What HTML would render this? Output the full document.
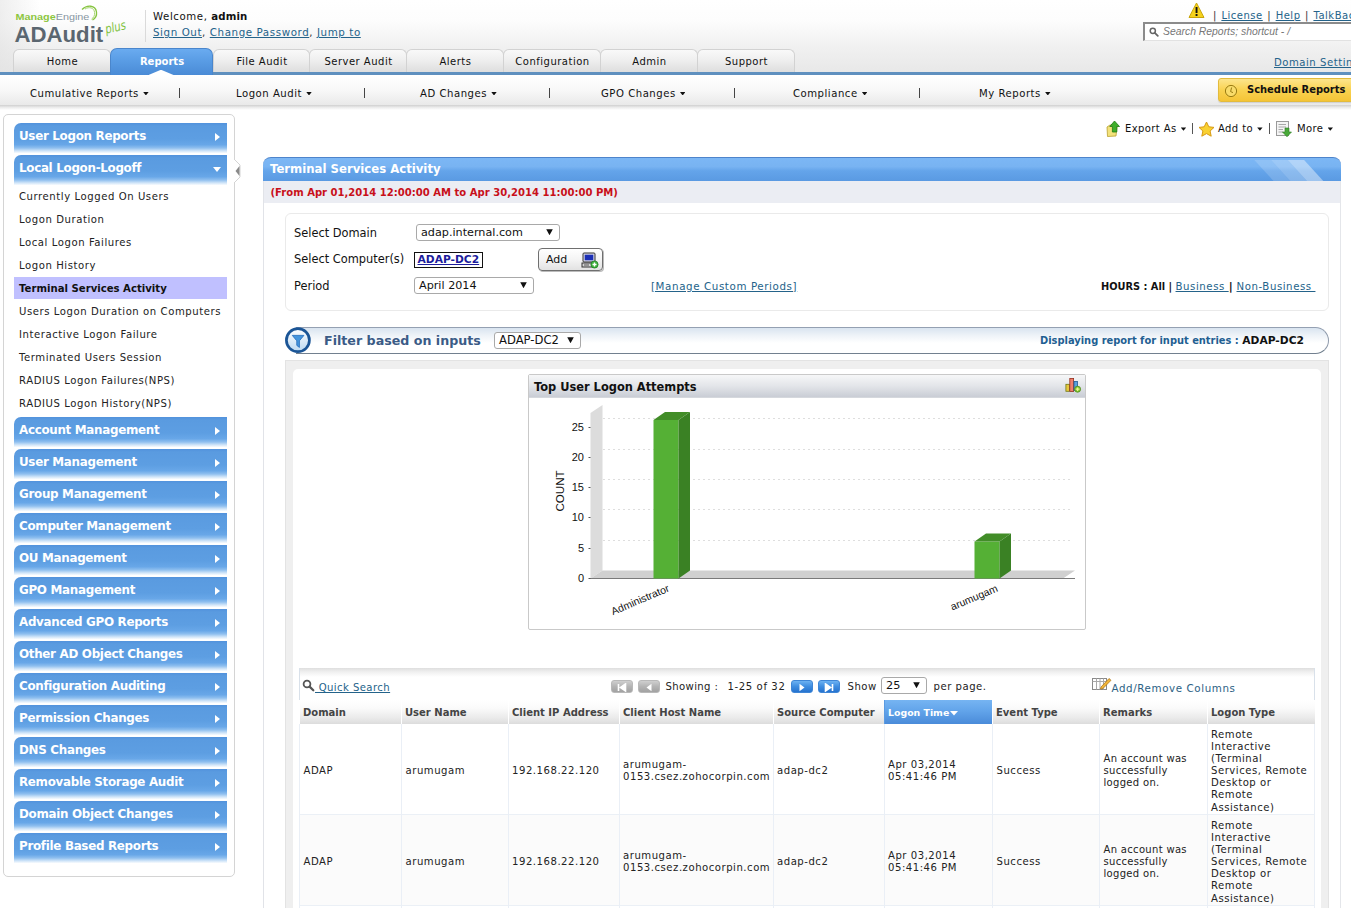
<!DOCTYPE html>
<html lang="en">
<head>
<meta charset="utf-8">
<title>ADAudit Plus - Terminal Services Activity</title>
<style>
*{box-sizing:border-box;margin:0;padding:0}
html,body{width:1351px;height:908px;overflow:hidden;background:#fff}
body{position:relative;font-family:"DejaVu Sans","Liberation Sans",sans-serif;font-size:11px;color:#222}
a{color:#24638a;text-decoration:underline}
.abs{position:absolute;white-space:nowrap}
/* header */
#hdr{position:absolute;left:0;top:0;width:1351px;height:72px;background:linear-gradient(to bottom,#ffffff 0,#fdfdfd 20px,#f0f0f0 48px,#e8e8e8 72px)}
#hdrshade{position:absolute;left:0;top:0;width:40px;height:72px;background:linear-gradient(to right,rgba(225,225,225,.55),rgba(255,255,255,0))}
#blueline{position:absolute;left:0;top:72px;width:1351px;height:3px;background:#5f90bf}
.tab{position:absolute;top:49px;height:23px;border:1px solid #d2d2d2;border-bottom:none;border-radius:6px 6px 0 0;background:linear-gradient(to bottom,#f9f9f9 0,#efefef 45%,#dedede 100%);text-align:center;padding-left:1px;font-size:10px;letter-spacing:.5px;line-height:24px;color:#111}
.tab.on{top:48px;height:27px;border:1px solid #4a86cc;border-bottom:none;border-radius:7px 7px 0 0;background:linear-gradient(to bottom,#6aabf0 0,#5b9ee6 40%,#4a8bd6 100%);color:#fff;font-weight:bold;font-size:10px;letter-spacing:0;line-height:25px}
#notch{position:absolute;left:148.5px;top:69.8px;width:25px;height:5.2px;background:#fff;clip-path:polygon(0 100%,50% 0,100% 100%)}
/* submenu */
#sub{position:absolute;left:0;top:75px;width:1351px;height:30px;background:linear-gradient(to bottom,#ffffff 0,#f8f8f8 50%,#e9e9e9 100%)}
#subsh{position:absolute;left:0;top:105px;width:1351px;height:5px;background:linear-gradient(to bottom,#cfcfcf,#ececec 50%,#fff)}
.sm{position:absolute;top:87px;font-size:10.1px;letter-spacing:.52px;line-height:13px;color:#111;white-space:nowrap}
.sm i{display:inline-block;width:5.4px;height:3.4px;background:#111;clip-path:polygon(0 0,100% 0,50% 100%);margin-left:4.3px;vertical-align:1.6px}
.sep{position:absolute;top:88px;width:1px;height:10px;background:#444}

/* logo */
#me{left:15.5px;top:9px;font-family:"Liberation Sans",sans-serif;font-size:10.8px;line-height:14px;transform:scaleY(.9);transform-origin:left bottom}
#me b{color:#8cc63f;font-weight:bold}
#me span{color:#8796a2}
#ada{left:14.5px;top:21.8px;font-family:"Liberation Sans",sans-serif;font-weight:bold;font-size:22.2px;line-height:26px;color:#5b6670;letter-spacing:0}
#plus{left:106.5px;top:23px;font-family:"DejaVu Sans","Liberation Sans",sans-serif;font-style:italic;font-size:11.5px;line-height:14px;color:#7fc241;transform:rotate(-13deg) scale(.88,1.12);transform-origin:left bottom}
#vsep{position:absolute;left:145px;top:10px;width:1px;height:32px;background:#dadada}
#wel{left:153px;top:10px;font-size:10.2px;letter-spacing:.58px;line-height:13px;color:#111}
#lnk{left:153px;top:26px;font-size:10.3px;letter-spacing:.58px;line-height:13px;color:#333}
#toplinks{left:1213px;top:8.5px;font-size:10px;line-height:13px;color:#333;word-spacing:.8px;letter-spacing:.52px}
#search{position:absolute;left:1143px;top:22px;width:220px;height:19px;background:#fff;border:1px solid #9a9a9a;border-top:2px solid #8b8b8b;border-left:2px solid #8b8b8b;border-bottom-color:#e2e2e2}
#search span{position:absolute;left:18px;top:1px;font-family:"Liberation Sans",sans-serif;font-style:italic;font-size:10.4px;line-height:13px;color:#777;white-space:nowrap}
#dset{left:1274px;top:55.5px;font-size:10.1px;letter-spacing:.52px;line-height:13px}
#sched{position:absolute;left:1218px;top:78px;width:140px;height:24px;border:1px solid #e3bb3c;border-radius:3px;background:linear-gradient(to bottom,#fde58c 0,#f9d251 50%,#f4c436 100%);box-shadow:0 1px 1px rgba(0,0,0,.12)}
#sched b{position:absolute;left:28px;top:4px;font-size:9.93px;line-height:13px;color:#111;white-space:nowrap}

/* sidebar */
#side{position:absolute;left:3px;top:114px;width:232px;height:763px;border:1px solid #d4d4d4;border-radius:5px;background:#fff}
.acc{position:absolute;left:14px;width:213px;height:32px;border-radius:7px 0 0 0;background:linear-gradient(to bottom,#5292dc 0,#5a9be0 3px,#5d9ee2 50%,#68a7e8 68%,#8fbfef 78%,#cfe4f8 87%,#ffffff 95%);color:#fff;font-weight:bold;font-size:11.9px;letter-spacing:-.3px;line-height:14px;padding:6.2px 0 0 5px;white-space:nowrap}
.acc i{position:absolute;left:201px;top:10.3px;width:0;height:0;border-top:4.8px solid transparent;border-bottom:4.8px solid transparent;border-left:5.6px solid #fff}
.acc i.dn{left:199px;top:12px;border-left:4.5px solid transparent;border-right:4.5px solid transparent;border-top:5.5px solid #fff;border-bottom:none}
.si{position:absolute;left:14px;width:213px;height:22px;padding:5.4px 0 0 5px;font-size:10.1px;letter-spacing:.56px;line-height:13px;color:#222;white-space:nowrap}
.si.on{background:#c0c0ff;font-weight:bold;font-size:10.14px;letter-spacing:0;color:#111}

/* main */
.tb{position:absolute;top:122.3px;font-size:10px;letter-spacing:.4px;line-height:13px;color:#111;white-space:nowrap}
.tb i{display:inline-block;width:5.4px;height:3.4px;background:#111;clip-path:polygon(0 0,100% 0,50% 100%);margin-left:4.2px;vertical-align:1.5px}
.tsep{position:absolute;top:123px;width:1px;height:11px;background:#555}
#panel{position:absolute;left:263px;top:181px;width:1078px;height:740px;border-left:1px solid #e1e3e8;border-right:1px solid #e4e6ea;background:#fff}
#title{position:absolute;left:263px;top:157px;width:1078px;height:24px;border-radius:8px 8px 0 0;border-top:1.5px solid #4d84cb;background:linear-gradient(to bottom,#7cb7f5 0,#78b3f2 38%,#64a4ea 56%,#5a9ae2 100%);overflow:hidden}
#title b{position:absolute;left:7px;top:4px;font-size:11.7px;line-height:14px;color:#fff;white-space:nowrap}
#title svg{position:absolute;right:0;top:0}
#daterow{position:absolute;left:264px;top:181px;width:1076px;height:22px;background:#ebedf3}
#daterow b{position:absolute;left:6.5px;top:5.8px;font-size:10.06px;line-height:12px;color:#c8101a;white-space:nowrap}
#form{position:absolute;left:285px;top:213px;width:1044px;height:98px;border:1px solid #eaeaea;border-radius:6px;background:#fff}
.fl{position:absolute;left:294px;font-size:11.4px;line-height:14px;color:#111;white-space:nowrap}
.sel{position:absolute;height:17px;border:1px solid #a9a9a9;border-radius:3px;background:#fff;font-size:11.2px;line-height:15px;color:#111;padding-left:4px;white-space:nowrap}
.sel i{position:absolute;right:6.2px;top:4.3px;width:6.6px;height:6px;background:#111;clip-path:polygon(0 0,100% 0,50% 100%)}

/* filter bar */
#fbar{position:absolute;left:296px;top:327px;width:1033px;height:27px;border:1px solid #8e9aab;border-top-color:#94a0b2;border-bottom-color:#72808f;border-left:none;border-radius:0 14px 14px 0;background:linear-gradient(to bottom,#d9e4f0 0,#eef3f8 30%,#ffffff 60%,#ffffff 100%)}
#fbar .t{position:absolute;left:27.5px;top:4.8px;font-size:11.9px;font-weight:bold;line-height:16px;color:#3b5b86;white-space:nowrap;transform:scaleX(1.064);transform-origin:left center}
#fbar .r{position:absolute;left:744px;top:6px;font-size:9.88px;font-weight:bold;line-height:13px;color:#1f5f92;white-space:nowrap}
#fbar .r b{font-size:10.71px;color:#111}
/* gray area */
#garea{position:absolute;left:285px;top:360px;width:1044px;height:560px;background:#efefef;border:1px solid #e3e3e3}
#ginner{position:absolute;left:293px;top:369px;width:1028px;height:560px;background:#fff;border-radius:5px 5px 0 0}
/* chart */
#chart{position:absolute;left:528px;top:374px;width:558px;height:256px;border:1px solid #c9c9c9;border-radius:2px;background:#fff}
#chart .h{position:absolute;left:0;top:0;width:556px;height:23px;background:linear-gradient(to bottom,#f6f7f8 0,#e3e5e9 50%,#c9cdd5 100%);border-bottom:1px solid #d5d8dd}
#chart .h b{position:absolute;left:5px;top:4.6px;font-size:11.41px;line-height:14px;color:#111;white-space:nowrap}

/* table */
#tbar{position:absolute;left:299px;top:668px;width:1015.5px;height:32px;border-left:1px solid #d9e1ea;border-right:1px solid #d9e1ea;background:linear-gradient(to bottom,#dedede 0,#f0f0f0 4px,#ffffff 9px,#ffffff 100%)}
.tt{position:absolute;font-size:10.1px;letter-spacing:.52px;line-height:13px;color:#222;white-space:nowrap}
.pg{position:absolute;top:680px;width:22px;height:13px;border-radius:3px}
.pg.g{background:linear-gradient(to bottom,#cfcfcf,#b4b4b4 50%,#a2a2a2);border:1px solid #b9b9b9}
.pg.b{background:linear-gradient(to bottom,#6db2f2,#3f8de0 50%,#2673cf);border:1px solid #3f86d6}
.pg svg{position:absolute;left:5px;top:2px}
#thead{position:absolute;left:299px;top:700px;width:1015.5px;height:24px;background:linear-gradient(to bottom,#ffffff 0,#fafafa 35%,#eaeaea 75%,#dcdcdc 100%)}
.th{position:absolute;top:700px;height:24px;border-left:1px solid #fff;font-size:10px;font-weight:bold;line-height:13px;color:#444;padding:6px 0 0 3px;white-space:nowrap}
.th.on{background:linear-gradient(to bottom,#76b4f2 0,#62a4ea 45%,#4a8bd9 100%);color:#fff;font-size:9.4px;border-left:1px solid #5a9be2}
.row{position:absolute;left:299px;width:1015.5px;height:91px;border-bottom:1px solid #ebf0f6;background:#fff}
.row.alt{background:#fbfbfb}
.vl{position:absolute;top:724px;width:1px;height:190px;background:#eaeff6}
.td{margin-top:0.9px;position:absolute;font-size:10.1px;letter-spacing:.52px;line-height:12.05px;color:#222;white-space:nowrap}
</style>
</head>
<body>
<div id="hdr"></div><div id="hdrshade"></div>
<div id="blueline"></div>
<div id="sub"></div><div id="subsh"></div>
<div class="abs" id="me"><b>Manage</b><span>Engine</span></div>
<svg class="abs" style="left:80px;top:4px" width="20" height="18" viewBox="0 0 20 18"><path d="M2 5.5 C7 0.5 15.5 1 16.5 8 C17 11.5 15 14.5 12.5 16" fill="none" stroke="#86c440" stroke-width="1.3"/><path d="M5 5 C9 2.5 14 3.5 14.6 8.5 C15 11.5 13.5 13.8 11.5 15.2" fill="none" stroke="#a7d46f" stroke-width="1"/></svg>
<div class="abs" id="ada">ADAudit</div>
<div class="abs" id="plus">plus</div>
<div id="vsep"></div>
<div class="abs" id="wel">Welcome, <b style="letter-spacing:.1px">admin</b></div>
<div class="abs" id="lnk"><a>Sign Out</a>, <a>Change Password</a>, <a>Jump to</a></div>
<svg class="abs" style="left:1188px;top:2px" width="17" height="17" viewBox="0 0 17 17"><path d="M8.5 1 L16 15.5 L1 15.5 Z" fill="#f6d21c" stroke="#c9a50a" stroke-width="1" stroke-linejoin="round"/><rect x="7.6" y="5" width="1.9" height="6" fill="#111"/><rect x="7.6" y="12" width="1.9" height="2" fill="#111"/></svg>
<div class="abs" id="toplinks">| <a>License</a> | <a>Help</a> | <a>TalkBack</a> | <a>About</a></div>
<div id="search"><svg style="position:absolute;left:4px;top:3px" width="10" height="10" viewBox="0 0 10 10"><circle cx="3.8" cy="3.8" r="2.6" fill="none" stroke="#666" stroke-width="1.5"/><path d="M5.8 5.8 L8.8 8.8" stroke="#666" stroke-width="1.8" stroke-linecap="round"/></svg><span>Search Reports; shortcut - /</span></div>
<div class="abs" id="dset"><a>Domain Settings</a></div>

<div class="tab" style="left:13px;width:98px">Home</div>
<div class="tab" style="left:213px;width:97px">File Audit</div>
<div class="tab" style="left:309px;width:98px">Server Audit</div>
<div class="tab" style="left:406px;width:98px">Alerts</div>
<div class="tab" style="left:503px;width:98px">Configuration</div>
<div class="tab" style="left:600px;width:98px">Admin</div>
<div class="tab" style="left:697px;width:98px">Support</div>
<div class="tab on" style="left:110px;width:103px">Reports</div>
<div id="notch"></div>

<div class="sm" style="left:30px">Cumulative Reports<i></i></div>
<div class="sep" style="left:179px"></div>
<div class="sm" style="left:236px">Logon Audit<i></i></div>
<div class="sep" style="left:364px"></div>
<div class="sm" style="left:420px">AD Changes<i></i></div>
<div class="sep" style="left:549px"></div>
<div class="sm" style="left:601px">GPO Changes<i></i></div>
<div class="sep" style="left:734px"></div>
<div class="sm" style="left:793px">Compliance<i></i></div>
<div class="sep" style="left:919px"></div>
<div class="sm" style="left:979px">My Reports<i></i></div>
<div id="sched"><svg style="position:absolute;left:5px;top:5px" width="14" height="14" viewBox="0 0 14 14"><circle cx="7" cy="7" r="5.6" fill="#f9dc6a" stroke="#9a7c12" stroke-width="1"/><path d="M7.6 3.5 L6.6 7.6 L9 8.6" fill="none" stroke="#9a7c12" stroke-width="1"/></svg><b>Schedule Reports</b></div>

<div id="side"></div>
<div class="acc" style="top:123px">User Logon Reports<i></i></div>
<div class="acc" style="top:155px">Local Logon-Logoff<i class=dn></i></div>
<div class="acc" style="top:417px">Account Management<i></i></div>
<div class="acc" style="top:449px">User Management<i></i></div>
<div class="acc" style="top:481px">Group Management<i></i></div>
<div class="acc" style="top:513px">Computer Management<i></i></div>
<div class="acc" style="top:545px">OU Management<i></i></div>
<div class="acc" style="top:577px">GPO Management<i></i></div>
<div class="acc" style="top:609px">Advanced GPO Reports<i></i></div>
<div class="acc" style="top:641px">Other AD Object Changes<i></i></div>
<div class="acc" style="top:673px">Configuration Auditing<i></i></div>
<div class="acc" style="top:705px">Permission Changes<i></i></div>
<div class="acc" style="top:737px">DNS Changes<i></i></div>
<div class="acc" style="top:769px">Removable Storage Audit<i></i></div>
<div class="acc" style="top:801px">Domain Object Changes<i></i></div>
<div class="acc" style="top:833px">Profile Based Reports<i></i></div>
<div class="si" style="top:185px">Currently Logged On Users</div>
<div class="si" style="top:208px">Logon Duration</div>
<div class="si" style="top:231px">Local Logon Failures</div>
<div class="si" style="top:254px">Logon History</div>
<div class="si on" style="top:277px">Terminal Services Activity</div>
<div class="si" style="top:300px">Users Logon Duration on Computers</div>
<div class="si" style="top:323px">Interactive Logon Failure</div>
<div class="si" style="top:346px">Terminated Users Session</div>
<div class="si" style="top:369px">RADIUS Logon Failures(NPS)</div>
<div class="si" style="top:392px">RADIUS Logon History(NPS)</div>
<svg class="abs" style="left:234px;top:159px" width="7" height="24" viewBox="0 0 7 24"><path d="M0 0 L6 6 L6 18 L0 24" fill="#fff" stroke="#d4d4d4" stroke-width="1"/><path d="M5.5 7 L5.5 17 L1.5 12 Z" fill="#8a8a8a"/></svg>

<svg class="abs" style="left:1106px;top:120px" width="16" height="17" viewBox="0 0 16 17"><path d="M1 7 L4 5 L9 5 L10 7 L11 7 L10 16 L1.5 16.5 Z" fill="#f3e27a" stroke="#b9a030" stroke-width=".8"/><path d="M8.5 1 L13.5 6.5 L10.8 6.5 L10.8 12 L6.4 12 L6.4 6.5 L3.8 6.5 Z" fill="#3fae2a" stroke="#1f7a12" stroke-width=".8"/></svg>
<div class="tb" style="left:1125px">Export As<i></i></div>
<div class="tsep" style="left:1192px"></div>
<svg class="abs" style="left:1198px;top:121px" width="17" height="16" viewBox="0 0 17 16"><path d="M8.5 1 L10.8 5.8 L16 6.4 L12.1 10 L13.2 15.2 L8.5 12.6 L3.8 15.2 L4.9 10 L1 6.4 L6.2 5.8 Z" fill="#f9d132" stroke="#d79a12" stroke-width="1" stroke-linejoin="round"/></svg>
<div class="tb" style="left:1218px">Add to<i></i></div>
<div class="tsep" style="left:1269px"></div>
<svg class="abs" style="left:1276px;top:121px" width="16" height="16" viewBox="0 0 16 16"><rect x=".5" y=".5" width="12" height="14" fill="#f4f4f4" stroke="#9a9a9a"/><path d="M2.5 3.5 H10 M2.5 6 H10 M2.5 8.5 H7 M2.5 11 H7" stroke="#a8a8a8" stroke-width="1"/><path d="M9 7 H13 V11 H15.5 L11 15.8 L6.5 11 H9 Z" fill="#49a93a" stroke="#2d7e22" stroke-width=".6"/></svg>
<div class="tb" style="left:1297px">More<i></i></div>

<div id="panel"></div>
<div id="title"><b>Terminal Services Activity</b><svg width="100" height="23" viewBox="0 0 100 23"><path d="M13.3 2 L30.1 2 L49.3 23 L32.5 23 Z" fill="#fff" fill-opacity=".16"/><path d="M30.1 2 L46.8 2 L66 23 L49.3 23 Z" fill="#fff" fill-opacity=".26"/><path d="M46.8 2 L63.1 2 L82.3 23 L66 23 Z" fill="#fff" fill-opacity=".42"/></svg></div>
<div id="daterow"><b>(From Apr 01,2014 12:00:00 AM to Apr 30,2014 11:00:00 PM)</b></div>
<div id="form"></div>
<div class="fl" style="top:226px">Select Domain</div>
<div class="fl" style="top:252px">Select Computer(s)</div>
<div class="fl" style="top:279px">Period</div>
<div class="sel" style="left:416px;top:224px;width:144px">adap.internal.com<i></i></div>
<div class="abs" style="left:414px;top:252px;width:69px;height:16px;border:1.5px solid #111;background:#fff;font-size:10.7px;line-height:13px;font-weight:bold;padding-left:2.5px"><a style="color:#1c1c9c">ADAP-DC2</a></div>
<div class="abs" style="left:538px;top:248px;width:65px;height:23px;border:1px solid #6f6f6f;border-radius:4px;background:linear-gradient(to bottom,#ffffff,#f4f4f4 50%,#e2e2e2);box-shadow:1px 1px 0 #bbb;font-size:11px;line-height:21px;padding-left:7px;color:#111">Add
<svg style="position:absolute;left:42px;top:3px" width="18" height="17" viewBox="0 0 18 17"><rect x="2" y="1" width="12" height="9" rx="1" fill="#d8d8e8" stroke="#333" stroke-width="1"/><rect x="3.7" y="2.7" width="8.6" height="5.6" fill="#1b2fb5"/><rect x="1" y="11" width="12" height="4" fill="#d6d6d6" stroke="#333" stroke-width="1"/><path d="M3 13 H8" stroke="#555"/><circle cx="13.5" cy="12.5" r="3.6" fill="#3db03a" stroke="#1f7d22" stroke-width=".7"/><path d="M13.5 10.5 V14.5 M11.5 12.5 H15.5" stroke="#fff" stroke-width="1.4"/></svg></div>
<div class="sel" style="left:414px;top:277px;width:120px">April 2014<i></i></div>
<div class="abs" style="left:651px;top:279.5px;font-size:10.3px;letter-spacing:.6px;line-height:13px"><a>[Manage Custom Periods]</a></div>
<div class="abs" style="left:1101px;top:280px;font-size:9.8px;line-height:13px;color:#111"><b>HOURS : All | </b><a style="font-size:10.2px;letter-spacing:.55px">Business </a><b style="font-size:11px"> | </b><a style="font-size:10.2px;letter-spacing:.55px">Non-Business&nbsp;</a></div>

<div id="fbar"><div class="t">Filter based on inputs</div><div class="r">Displaying report for input entries : <b>ADAP-DC2</b></div></div>
<div class="sel" style="left:494px;top:332px;width:87px;font-size:11.6px">ADAP-DC2<i></i></div>
<svg class="abs" style="left:284px;top:326px" width="28" height="28" viewBox="0 0 28 28"><defs><linearGradient id="fg" x1="0" y1="0" x2="0" y2="1"><stop offset="0" stop-color="#ffffff"/><stop offset="1" stop-color="#bcd9f2"/></linearGradient></defs><circle cx="13.9" cy="14.2" r="11.5" fill="url(#fg)" stroke="#1b5596" stroke-width="2.7"/><path d="M8.3 9.4 H19.9 L15.4 14.8 V21.4 L12.8 19.4 V14.8 Z" fill="#4595dc" stroke="#2b72bf" stroke-width=".9" stroke-linejoin="round"/></svg>
<div id="garea"></div><div id="ginner"></div>
<div id="chart"><div class="h"><b>Top User Logon Attempts</b>
<svg style="position:absolute;left:536px;top:2px" width="17" height="16" viewBox="0 0 17 16"><rect x=".9" y="7.3" width="3.6" height="7" fill="#e8c83e" stroke="#6f7a14" stroke-width=".8"/><rect x="4.8" y="1.4" width="3.8" height="13" fill="#ef7f6c" stroke="#93301f" stroke-width=".8"/><rect x="9" y="4.5" width="3.4" height="9" fill="#5aa0de" stroke="#1f5a96" stroke-width=".8"/><circle cx="12.6" cy="12.2" r="3" fill="#86c531" stroke="#4c8a1c" stroke-width=".8"/><path d="M12.6 10.4 V14 M10.8 12.2 H14.4" stroke="#eaf58c" stroke-width="1.2"/></svg></div>
<svg style="position:absolute;left:0;top:24px" width="556" height="230" viewBox="529 399 556 230" font-family="'Liberation Sans',sans-serif">
<!-- wall & floor -->
<path d="M590.5 413 L602.5 405 L602.5 570.5 L590.5 578.5 Z" fill="#dcdcdc"/>
<path d="M590.5 578.5 L602.5 570.5 L1075 570.5 L1063 578.5 Z" fill="#d0d0d0"/>
<g stroke="#dedede" stroke-width="1" stroke-dasharray="2 3">
<path d="M603 418.5 H1073"/><path d="M603 449.5 H1073"/><path d="M603 479.5 H1073"/><path d="M603 509.5 H1073"/><path d="M603 540.5 H1073"/>
</g>
<path d="M589 578.5 H1075" stroke="#7a7a7a" stroke-width="1.2"/>
<g stroke="#555" stroke-width="1"><path d="M588.5 427.5 H590.5"/><path d="M588.5 457.5 H590.5"/><path d="M588.5 487.5 H590.5"/><path d="M588.5 517.5 H590.5"/><path d="M588.5 548.5 H590.5"/><path d="M588.5 578.5 H590.5"/></g>
<g font-size="11" fill="#111" text-anchor="end">
<text x="584" y="430.6">25</text><text x="584" y="460.8">20</text><text x="584" y="491">15</text><text x="584" y="521.2">10</text><text x="584" y="551.6">5</text><text x="584" y="582">0</text>
</g>
<text font-size="11.6" fill="#111" text-anchor="middle" transform="translate(563.5 491) rotate(-90)">COUNT</text>
<!-- bar1 -->
<path d="M653.5 420 L678.5 420 L678.5 578.5 L653.5 578.5 Z" fill="#55b035"/>
<path d="M678.5 420 L690 412 L690 570.5 L678.5 578.5 Z" fill="#3a8124"/>
<path d="M653.5 420 L665 412 L690 412 L678.5 420 Z" fill="#428d28"/>
<!-- bar2 -->
<path d="M974.5 541.5 L999.5 541.5 L999.5 578.5 L974.5 578.5 Z" fill="#55b035"/>
<path d="M999.5 541.5 L1011 533.5 L1011 570.5 L999.5 578.5 Z" fill="#3a8124"/>
<path d="M974.5 541.5 L986 533.5 L1011 533.5 L999.5 541.5 Z" fill="#428d28"/>
<text font-size="10.5" fill="#111" text-anchor="end" transform="translate(670 591) rotate(-23)">Administrator</text>
<text font-size="10.5" fill="#111" text-anchor="end" transform="translate(998.5 591) rotate(-23)">arumugam</text>
</svg>
</div>
<div id="tbar"></div>
<svg class="abs" style="left:302px;top:679px" width="13" height="13" viewBox="0 0 13 13"><circle cx="5" cy="5" r="3.4" fill="none" stroke="#555" stroke-width="1.8"/><path d="M7.6 7.6 L11.3 11.3" stroke="#555" stroke-width="2.2" stroke-linecap="round"/></svg>
<div class="tt" style="left:315px;top:681px;font-size:10.1px;letter-spacing:.42px"><a>&nbsp;Quick Search</a></div>
<div class="pg g" style="left:611px"><svg width="10" height="9" viewBox="0 0 10 9"><path d="M1.5 1 V8 M8.5 1 L3.5 4.5 L8.5 8 Z" fill="#fff" stroke="#fff" stroke-width="1.6"/></svg></div>
<div class="pg g" style="left:638px"><svg width="10" height="9" viewBox="0 0 10 9"><path d="M7.5 0.8 L2.5 4.5 L7.5 8.2 Z" fill="#fff"/></svg></div>
<div class="tt" style="left:665.5px;top:680.3px;font-size:10.1px;letter-spacing:.36px">Showing :</div>
<div class="tt" style="left:727.5px;top:680.3px;font-size:10.1px;letter-spacing:.6px">1-25 of 32</div>
<div class="pg b" style="left:791px"><svg width="10" height="9" viewBox="0 0 10 9"><path d="M2.5 0.8 L7.5 4.5 L2.5 8.2 Z" fill="#fff"/></svg></div>
<div class="pg b" style="left:818px"><svg width="10" height="9" viewBox="0 0 10 9"><path d="M8.5 1 V8 M1.5 1 L6.5 4.5 L1.5 8 Z" fill="#fff" stroke="#fff" stroke-width="1.6"/></svg></div>
<div class="tt" style="left:847.5px;top:680px">Show</div>
<div class="sel" style="left:881px;top:677px;width:46px;font-size:11.3px">25<i></i></div>
<div class="tt" style="left:933.5px;top:680px">per page.</div>
<svg class="abs" style="left:1092px;top:677px" width="20" height="14" viewBox="0 0 20 14"><rect x=".5" y="1.5" width="14" height="11" fill="#fff" stroke="#8a8a8a"/><path d="M.5 4.5 H14.5 M4.5 1.5 V12.5 M8 1.5 V12.5 M11.5 1.5 V12.5" stroke="#a9a9a9" stroke-width="1"/><path d="M9 10 L17 1.5 L19 3.3 L11 11.5 L8.5 12 Z" fill="#f0b53a" stroke="#a86d10" stroke-width=".7"/></svg>
<div class="tt" style="left:1111.5px;top:681.5px;font-size:10.3px;letter-spacing:.6px;color:#2c6184">Add/Remove Columns</div>
<div id="thead"></div>
<div class="th" style="left:299px;width:102px">Domain</div>
<div class="th" style="left:401px;width:107px">User Name</div>
<div class="th" style="left:508px;width:111px">Client IP Address</div>
<div class="th" style="left:619px;width:154px">Client Host Name</div>
<div class="th" style="left:773px;width:111px">Source Computer</div>
<div class="th on" style="left:884px;width:108px">Logon Time<svg width="10" height="6" viewBox="0 0 10 6" style="margin-left:0"><path d="M1 1 H9 L5 5.5 Z" fill="#fff"/></svg></div>
<div class="th" style="left:992px;width:107px">Event Type</div>
<div class="th" style="left:1099px;width:108px">Remarks</div>
<div class="th" style="left:1207px;width:107.5px">Logon Type</div>
<div class="row" style="top:724px"></div>
<div class="row alt" style="top:815px"></div>
<div class="vl" style="left:299px"></div>
<div class="vl" style="left:401px"></div>
<div class="vl" style="left:508px"></div>
<div class="vl" style="left:619px"></div>
<div class="vl" style="left:773px"></div>
<div class="vl" style="left:884px"></div>
<div class="vl" style="left:992px"></div>
<div class="vl" style="left:1099px"></div>
<div class="vl" style="left:1207px"></div>
<div class="vl" style="left:1314px"></div>
<div class="td" style="left:303.5px;top:764.48px">ADAP</div>
<div class="td" style="left:405.5px;top:764.48px">arumugam</div>
<div class="td" style="left:512px;top:764.48px">192.168.22.120</div>
<div class="td" style="left:623px;top:758.45px">arumugam-<br>0153.csez.zohocorpin.com</div>
<div class="td" style="left:777px;top:764.48px">adap-dc2</div>
<div class="td" style="left:888px;top:758.45px">Apr 03,2014<br>05:41:46 PM</div>
<div class="td" style="left:996.5px;top:764.48px">Success</div>
<div class="td" style="left:1103.5px;top:752.42px;font-size:10px;letter-spacing:.32px">An account was<br>successfully<br>logged on.</div>
<div class="td" style="left:1211px;top:728.33px">Remote<br>Interactive<br>(Terminal<br>Services, Remote<br>Desktop or<br>Remote<br>Assistance)</div>
<div class="td" style="left:303.5px;top:855.48px">ADAP</div>
<div class="td" style="left:405.5px;top:855.48px">arumugam</div>
<div class="td" style="left:512px;top:855.48px">192.168.22.120</div>
<div class="td" style="left:623px;top:849.45px">arumugam-<br>0153.csez.zohocorpin.com</div>
<div class="td" style="left:777px;top:855.48px">adap-dc2</div>
<div class="td" style="left:888px;top:849.45px">Apr 03,2014<br>05:41:46 PM</div>
<div class="td" style="left:996.5px;top:855.48px">Success</div>
<div class="td" style="left:1103.5px;top:843.42px;font-size:10px;letter-spacing:.32px">An account was<br>successfully<br>logged on.</div>
<div class="td" style="left:1211px;top:819.33px">Remote<br>Interactive<br>(Terminal<br>Services, Remote<br>Desktop or<br>Remote<br>Assistance)</div>
</body>
</html>
